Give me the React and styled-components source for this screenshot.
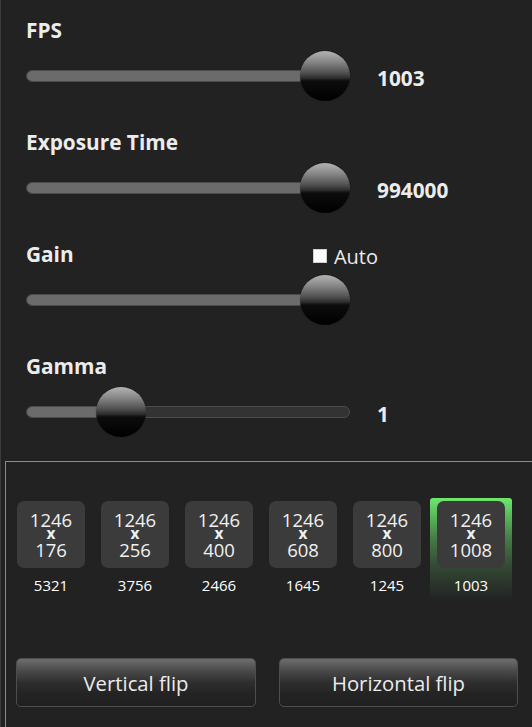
import React from "react";
import styled, { createGlobalStyle } from "styled-components";

const GlobalStyle = createGlobalStyle`
  html, body {
    margin: 0;
    padding: 0;
    background: #222222;
  }
  body {
    font-family: "Open Sans", "Noto Sans", "Liberation Sans", sans-serif;
    color: #ececec;
  }
`;

const Panel = styled.div`
  width: 532px;
  height: 727px;
  box-sizing: border-box;
  border-left: 1px solid #3c3c3c;
  background: #222222;
  display: flex;
  flex-direction: column;
  overflow: hidden;
`;

const Controls = styled.div`
  display: flex;
  flex-direction: column;
  gap: 28px;
  padding: 17px 0 0 25px;
`;

const Section = styled.div`
  display: flex;
  flex-direction: column;
  gap: 7px;
`;

const Header = styled.div`
  width: 352px;
  display: flex;
  justify-content: space-between;
  align-items: baseline;
  height: 27px;
`;

const Label = styled.span`
  font-size: 20.8px;
  font-weight: 700;
  line-height: 27px;
  color: #ececec;
`;

const AutoCheck = styled.label`
  display: flex;
  align-items: center;
  gap: 7px;
  font-size: 20px;
  line-height: 27px;
  color: #ececec;
  transform: translateY(1px);
`;

const Box = styled.span`
  width: 12px;
  height: 12px;
  background: #ffffff;
  border: 1px solid #cfcfcf;
`;

const Row = styled.div`
  display: flex;
  align-items: center;
  height: 50px;
  gap: 27px;
`;

const Track = styled.div`
  position: relative;
  width: 324px;
  height: 50px;
  display: flex;
  align-items: center;
`;

const Rail = styled.div`
  width: 100%;
  height: 12px;
  box-sizing: border-box;
  border-radius: 6px;
  background: #333333;
  border: 1px solid #4c4c4c;
  overflow: hidden;
`;

const Fill = styled.div`
  height: 100%;
  background: #6b6b6b;
`;

const Thumb = styled.div`
  position: absolute;
  top: 0;
  width: 50px;
  height: 50px;
  border-radius: 50%;
  background: linear-gradient(
    to bottom,
    #b4b4b4 0%,
    #8a8a8a 20%,
    #555555 42%,
    #2e2e2e 54%,
    #0c0c0c 60%,
    #000000 100%
  );
  box-shadow: 0 0 1px rgba(0, 0, 0, 0.6);
`;

const Value = styled.span`
  font-size: 20.8px;
  font-weight: 700;
  line-height: 27px;
  margin-top: 4px;
  color: #ececec;
`;

const GroupBox = styled.div`
  flex: 1;
  margin: 24px 0 0 4px;
  border-top: 1px solid #8a8a8a;
  border-left: 1px solid #8a8a8a;
  display: flex;
  flex-direction: column;
`;

const Resolutions = styled.div`
  display: flex;
  gap: 2px;
  padding: 36px 0 0 4px;
`;

const Cell = styled.div`
  width: 82px;
  box-sizing: border-box;
  padding: 3px 7px 5px;
  display: flex;
  flex-direction: column;
  align-items: center;
  border-radius: 3px 3px 0 0;
  background: ${(p) =>
    p.$active
      ? "linear-gradient(to bottom, #6fe86f 0%, #58b858 18%, #477a47 40%, #354a35 66%, #222222 100%)"
      : "transparent"};
`;

const Tile = styled.div`
  width: 68px;
  height: 67px;
  border-radius: 7px;
  background: #3b3b3b;
  display: flex;
  flex-direction: column;
  align-items: center;
  justify-content: center;
  padding-top: 1px;
  box-sizing: border-box;
  color: #f0f0f0;
`;

const Dim = styled.span`
  display: block;
  height: 14px;
  font-size: 18.5px;
  line-height: 14px;
`;

const Times = styled.span`
  display: block;
  height: 16px;
  font-size: 15.5px;
  font-weight: 700;
  line-height: 13px;
`;

const Rate = styled.span`
  margin-top: 8px;
  font-size: 15px;
  line-height: 19px;
  color: #ffffff;
`;

const Buttons = styled.div`
  display: grid;
  grid-template-columns: 240px 239px;
  gap: 23px;
  padding: 58px 0 0 10px;
`;

const Button = styled.button`
  height: 49px;
  border-radius: 5px;
  border: 1px solid #4e4e4e;
  background: linear-gradient(
    to bottom,
    #6e6e6e 0%,
    #4a4a4a 25%,
    #2e2e2e 50%,
    #232323 75%,
    #202020 100%
  );
  color: #ececec;
  font-family: "Open Sans", "Noto Sans", "Liberation Sans", sans-serif;
  font-size: 20.3px;
  padding: 0;
  cursor: pointer;
`;

const sliders = [
  { label: "FPS", value: "1003", pos: 1 },
  { label: "Exposure Time", value: "994000", pos: 1 },
  { label: "Gain", value: "", pos: 1, auto: true },
  { label: "Gamma", value: "1", pos: 0.255 },
];

const resolutions = [
  { h: "176", fps: "5321" },
  { h: "256", fps: "3756" },
  { h: "400", fps: "2466" },
  { h: "608", fps: "1645" },
  { h: "800", fps: "1245" },
  { h: "1008", fps: "1003", active: true },
];

function Slider({ pos }) {
  const left = Math.round(pos * 274);
  return (
    <Track>
      <Rail>
        <Fill style={{ width: left + 25 }} />
      </Rail>
      <Thumb style={{ left }} />
    </Track>
  );
}

export default function App() {
  return (
    <>
      <GlobalStyle />
      <Panel>
        <Controls>
          {sliders.map((s) => (
            <Section key={s.label}>
              <Header>
                <Label>{s.label}</Label>
                {s.auto && (
                  <AutoCheck>
                    <Box />
                    Auto
                  </AutoCheck>
                )}
              </Header>
              <Row>
                <Slider pos={s.pos} />
                <Value>{s.value}</Value>
              </Row>
            </Section>
          ))}
        </Controls>
        <GroupBox>
          <Resolutions>
            {resolutions.map((r) => (
              <Cell key={r.h} $active={r.active}>
                <Tile>
                  <Dim>1246</Dim>
                  <Times>x</Times>
                  <Dim>{r.h}</Dim>
                </Tile>
                <Rate>{r.fps}</Rate>
              </Cell>
            ))}
          </Resolutions>
          <Buttons>
            <Button>Vertical flip</Button>
            <Button>Horizontal flip</Button>
          </Buttons>
        </GroupBox>
      </Panel>
    </>
  );
}
